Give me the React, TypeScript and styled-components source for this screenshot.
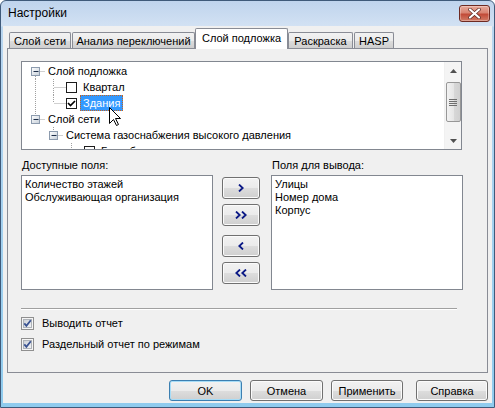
import React from 'react';
import styled, { createGlobalStyle } from 'styled-components';

const GlobalStyle = createGlobalStyle`
  html, body { margin: 0; padding: 0; background: #ffffff; }
  body {
    font-family: "Liberation Sans", Arial, sans-serif;
    font-size: 11px;
    color: #000;
  }
  * { box-sizing: border-box; }
`;

const Window = styled.div`
  width: 495px;
  height: 408px;
  display: flex;
  flex-direction: column;
  border: 1px solid #3f5a7a;
  border-radius: 6px 6px 0 0;
  background: linear-gradient(to bottom, #bfd4ed 0px, #d2e1f3 25px, #b9d6f0 26px, #8fcbee 100%);
  overflow: hidden;
`;

const TitleBar = styled.div`
  height: 25px;
  flex-shrink: 0;
  display: flex;
  align-items: flex-start;
  justify-content: space-between;
  padding: 0 4px 0 7px;
`;

const Title = styled.span`
  font-size: 12px;
  line-height: 25px;
  color: #000;
`;

const CloseButton = styled.div`
  margin-top: 4px;
  width: 31px;
  height: 17px;
  border: 1px solid #6e2a22;
  border-radius: 3px;
  background: linear-gradient(to bottom, #e8a99b 0%, #d98472 45%, #c24b38 55%, #d27c66 100%);
  box-shadow: inset 0 0 0 1px rgba(255, 255, 255, 0.3);
  display: flex;
  align-items: center;
  justify-content: center;
`;

const Client = styled.div`
  flex: 1;
  margin: 0 2px 4px 2px;
  background: #f0f0f0;
  padding: 2px 4px 0 4px;
  display: flex;
  flex-direction: column;
`;

const TabStrip = styled.div`
  height: 20px;
  display: flex;
  align-items: flex-end;
  gap: 1px;
  padding-left: 2px;
  position: relative;
  z-index: 1;
`;

const Tab = styled.div<{ $w: number; $active?: boolean }>`
  width: ${(p) => p.$w}px;
  height: ${(p) => (p.$active ? 21 : 16)}px;
  margin: ${(p) => (p.$active ? '0 -1px -1px -1px' : '0')};
  border: 1px solid #898c95;
  border-bottom: none;
  border-radius: 2px 2px 0 0;
  background: ${(p) =>
    p.$active ? '#ffffff' : 'linear-gradient(to bottom, #f2f2f2 0%, #ebebeb 50%, #dddddd 51%, #cfcfcf 100%)'};
  display: flex;
  align-items: center;
  justify-content: center;
  padding-bottom: ${(p) => (p.$active ? 2 : 0)}px;
  white-space: nowrap;
`;

const Panel = styled.div`
  height: 325px;
  border: 1px solid #898c95;
  background: #f0f0f0;
  padding: 12px 0 0 13px;
  display: flex;
  flex-direction: column;
`;

const Tree = styled.div`
  position: relative;
  width: 441px;
  height: 89px;
  border: 1px solid #828790;
  background: #fff;
  display: flex;
`;

const TreeContent = styled.div`
  flex: 1;
  overflow: hidden;
  padding-top: 1px;
  display: flex;
  flex-direction: column;
`;

const TreeRow = styled.div`
  height: 16px;
  flex-shrink: 0;
  display: flex;
  align-items: center;
  white-space: nowrap;
`;

const TreeLabel = styled.span<{ $selected?: boolean }>`
  height: 16px;
  line-height: 14px;
  padding: 0 2px;
  border: 1px ${(p) => (p.$selected ? 'dotted #c8641e' : 'solid transparent')};
  background: ${(p) => (p.$selected ? '#3399ff' : 'transparent')};
  color: ${(p) => (p.$selected ? '#fff' : '#000')};
`;

const TreeCheck = styled.span`
  width: 11px;
  height: 11px;
  margin-right: 3px;
  border: 1px solid #1c1c1c;
  background: #fff;
  display: flex;
  align-items: center;
  justify-content: center;
  flex-shrink: 0;
`;

const Cursor = styled.svg`
  position: absolute;
  left: 87px;
  top: 45px;
`;

const ScrollBar = styled.div`
  width: 17px;
  background: #f4f4f4;
  border-left: 1px solid #f0f0f0;
  display: flex;
  flex-direction: column;
  align-items: center;
`;

const ScrollArrow = styled.div`
  width: 17px;
  height: 17px;
  display: flex;
  align-items: center;
  justify-content: center;
`;

const ScrollThumb = styled.div`
  margin-top: 3px;
  width: 15px;
  height: 40px;
  border: 1px solid #979797;
  border-radius: 2px;
  background: linear-gradient(to right, #f2f2f2 0%, #e6e6e6 50%, #d8d8d8 51%, #d0d0d0 100%);
  display: flex;
  align-items: center;
  justify-content: center;
`;

const ScrollSpacer = styled.div`
  flex: 1;
`;

const FieldsGrid = styled.div`
  margin-top: 9px;
  display: grid;
  grid-template-columns: 192px 9px 38px 11px 192px;
  grid-template-rows: 13px 115px;
  row-gap: 3px;
`;

const FieldLabel = styled.div<{ $col: number }>`
  grid-column: ${(p) => p.$col};
  grid-row: 1;
  line-height: 13px;
  padding-left: 1px;
`;

const ListBox = styled.div<{ $col: number }>`
  grid-column: ${(p) => p.$col};
  grid-row: 2;
  border: 1px solid #828790;
  background: #fff;
  padding: 2px 3px;
`;

const ListItem = styled.div`
  line-height: 13px;
  white-space: nowrap;
`;

const MoveColumn = styled.div`
  grid-column: 3;
  grid-row: 2;
  padding-top: 2px;
  display: flex;
  flex-direction: column;
`;

const Button = styled.div<{ $w: number; $h: number; $default?: boolean; $gap?: number }>`
  width: ${(p) => p.$w}px;
  height: ${(p) => p.$h}px;
  margin-top: ${(p) => p.$gap ?? 0}px;
  border: 1px solid ${(p) => (p.$default ? '#3c7fb1' : '#707070')};
  border-radius: 3px;
  background: linear-gradient(to bottom, #f2f2f2 0%, #ebebeb 50%, #dddddd 51%, #cfcfcf 100%);
  box-shadow: inset 0 0 0 1px ${(p) => (p.$default ? '#a6dcf7' : '#fbfbfb')};
  display: flex;
  align-items: center;
  justify-content: center;
  flex-shrink: 0;
`;

const Separator = styled.div`
  margin-top: 18px;
  width: 436px;
  height: 2px;
  border-top: 1px solid #a0a0a0;
  border-bottom: 1px solid #ffffff;
`;

const CheckRow = styled.div<{ $gap: number }>`
  margin-top: ${(p) => p.$gap}px;
  height: 13px;
  display: flex;
  align-items: center;
  gap: 8px;
  line-height: 13px;
`;

const Footer = styled.div`
  margin-top: 7px;
  display: flex;
  justify-content: flex-end;
  gap: 8px;
`;

const FooterButton = styled(Button)<{ $extra?: number }>`
  margin-left: ${(p) => p.$extra ?? 0}px;
`;

type TreeNode = {
  level: number;
  label: string;
  kind: 'expand' | 'check';
  checked?: boolean;
  pipes: boolean[];
  up: boolean;
  down: boolean;
  selected?: boolean;
};

const treeRows: TreeNode[] = [
  { level: 0, label: 'Слой подложка', kind: 'expand', pipes: [], up: false, down: true },
  { level: 1, label: 'Квартал', kind: 'check', pipes: [true], up: true, down: true },
  { level: 1, label: 'Здания', kind: 'check', checked: true, pipes: [true], up: true, down: false, selected: true },
  { level: 0, label: 'Слой сети', kind: 'expand', pipes: [], up: true, down: false },
  { level: 1, label: 'Система газоснабжения высокого давления', kind: 'expand', pipes: [false], up: true, down: false },
  { level: 2, label: 'Газ. оборудование', kind: 'check', pipes: [false, false], up: true, down: true },
];

const DOT = { stroke: '#a0a0a0', strokeWidth: 1, strokeDasharray: '1 1' };

function Connector({ node }: { node: TreeNode }) {
  const w = 18 * node.level + (node.kind === 'expand' ? 23 : 26);
  const cx = 13.5 + 18 * node.level;
  return (
    <svg width={w} height={16} style={{ flexShrink: 0 }}>
      {node.pipes.map((p, i) =>
        p ? <line key={i} x1={13.5 + 18 * i} y1={0} x2={13.5 + 18 * i} y2={16} {...DOT} /> : null
      )}
      {node.up && <line x1={cx} y1={0} x2={cx} y2={8} {...DOT} />}
      {node.down && <line x1={cx} y1={9} x2={cx} y2={16} {...DOT} />}
      <line x1={cx + 1} y1={8.5} x2={w} y2={8.5} {...DOT} />
      {node.kind === 'expand' && (
        <g>
          <defs>
            <linearGradient id="exg" x1="0" y1="0" x2="1" y2="1">
              <stop offset="0" stopColor="#ffffff" />
              <stop offset="1" stopColor="#c6cfd9" />
            </linearGradient>
          </defs>
          <rect x={cx - 4} y={4.5} width={8} height={8} fill="url(#exg)" stroke="#8c9bae" />
          <line x1={cx - 2} y1={8.5} x2={cx + 3} y2={8.5} stroke="#1e2f4a" />
        </g>
      )}
    </svg>
  );
}

function TickMark() {
  return (
    <svg width={9} height={9} viewBox="0 0 9 9">
      <path d="M1 4 L3.5 6.5 L8 2" fill="none" stroke="#000" strokeWidth={1.7} />
    </svg>
  );
}

function ThemedCheckbox() {
  return (
    <svg width={13} height={13} viewBox="0 0 13 13">
      <defs>
        <linearGradient id="cbg" x1="0" y1="0" x2="1" y2="1">
          <stop offset="0" stopColor="#cbcfd5" />
          <stop offset="1" stopColor="#f4f5f7" />
        </linearGradient>
      </defs>
      <rect x={0.5} y={0.5} width={12} height={12} fill="#f5f5f5" stroke="#8f8f8f" />
      <rect x={2.5} y={2.5} width={8} height={8} fill="url(#cbg)" stroke="#aeb3b9" />
      <path d="M3.3 6.3 L5.4 8.8 L9.8 3.2" fill="none" stroke="#3a5392" strokeWidth={1.8} />
    </svg>
  );
}

function Chevrons({ dir, count }: { dir: 'right' | 'left'; count: number }) {
  const w = count === 1 ? 6 : 12;
  return (
    <svg width={w} height={8} viewBox={`0 0 ${w} 8`}>
      {Array.from({ length: count }).map((_, i) => {
        const x0 = i * 6;
        const pts =
          dir === 'right'
            ? `${x0 + 1},0.5 ${x0 + 4.7},4 ${x0 + 1},7.5`
            : `${x0 + 5},0.5 ${x0 + 1.3},4 ${x0 + 5},7.5`;
        return <polyline key={i} points={pts} fill="none" stroke="#0c1a86" strokeWidth={1.8} />;
      })}
    </svg>
  );
}

function ScrollTriangle({ up }: { up?: boolean }) {
  return (
    <svg width={7} height={4} viewBox="0 0 7 4">
      <path d={up ? 'M0 4 L3.5 0 L7 4 Z' : 'M0 0 L3.5 4 L7 0 Z'} fill="#505050" />
    </svg>
  );
}

const tabs = [
  { label: 'Слой сети', w: 62 },
  { label: 'Анализ переключений', w: 123 },
  { label: 'Слой подложка', w: 93, active: true },
  { label: 'Раскраска', w: 65 },
  { label: 'HASP', w: 40 },
];

export default function App() {
  return (
    <>
      <GlobalStyle />
      <Window>
        <TitleBar>
          <Title>Настройки</Title>
          <CloseButton>
            <svg width={13} height={11} viewBox="0 0 13 11">
              <path d="M2 1.5 L11 9.5 M11 1.5 L2 9.5" stroke="#5a2a24" strokeWidth={3.6} strokeLinecap="round" />
              <path d="M2 1.5 L11 9.5 M11 1.5 L2 9.5" stroke="#ffffff" strokeWidth={2.2} strokeLinecap="round" />
            </svg>
          </CloseButton>
        </TitleBar>
        <Client>
          <TabStrip>
            {tabs.map((t) => (
              <Tab key={t.label} $w={t.w} $active={t.active}>
                {t.label}
              </Tab>
            ))}
          </TabStrip>
          <Panel>
            <Tree>
              <TreeContent>
                {treeRows.map((n) => (
                  <TreeRow key={n.label}>
                    <Connector node={n} />
                    {n.kind === 'check' && <TreeCheck>{n.checked && <TickMark />}</TreeCheck>}
                    <TreeLabel $selected={n.selected}>{n.label}</TreeLabel>
                  </TreeRow>
                ))}
              </TreeContent>
              <ScrollBar>
                <ScrollArrow>
                  <ScrollTriangle up />
                </ScrollArrow>
                <ScrollThumb>
                  <svg width={8} height={7} viewBox="0 0 8 7">
                    {[0.5, 2.5, 4.5, 6.5].map((y) => (
                      <line key={y} x1={0} y1={y} x2={8} y2={y} stroke="#6e6e6e" />
                    ))}
                  </svg>
                </ScrollThumb>
                <ScrollSpacer />
                <ScrollArrow>
                  <ScrollTriangle />
                </ScrollArrow>
              </ScrollBar>
              <Cursor width={13} height={20} viewBox="0 0 13 20">
                <path
                  d="M0.5 0.5 L0.5 16.5 L4.5 12.5 L7.5 18.5 L9.5 17.5 L6.5 11.5 L11.5 11.5 Z"
                  fill="#fff"
                  stroke="#000"
                />
              </Cursor>
            </Tree>

            <FieldsGrid>
              <FieldLabel $col={1}>Доступные поля:</FieldLabel>
              <FieldLabel $col={5}>Поля для вывода:</FieldLabel>
              <ListBox $col={1}>
                <ListItem>Количество этажей</ListItem>
                <ListItem>Обслуживающая организация</ListItem>
              </ListBox>
              <MoveColumn>
                <Button $w={38} $h={22}>
                  <Chevrons dir="right" count={1} />
                </Button>
                <Button $w={38} $h={22} $gap={5}>
                  <Chevrons dir="right" count={2} />
                </Button>
                <Button $w={38} $h={22} $gap={9}>
                  <Chevrons dir="left" count={1} />
                </Button>
                <Button $w={38} $h={22} $gap={5}>
                  <Chevrons dir="left" count={2} />
                </Button>
              </MoveColumn>
              <ListBox $col={5}>
                <ListItem>Улицы</ListItem>
                <ListItem>Номер дома</ListItem>
                <ListItem>Корпус</ListItem>
              </ListBox>
            </FieldsGrid>

            <Separator />
            <CheckRow $gap={7}>
              <ThemedCheckbox />
              Выводить отчет
            </CheckRow>
            <CheckRow $gap={8}>
              <ThemedCheckbox />
              Раздельный отчет по режимам
            </CheckRow>
          </Panel>
          <Footer>
            <FooterButton $w={73} $h={21} $default>
              OK
            </FooterButton>
            <FooterButton $w={73} $h={21}>
              Отмена
            </FooterButton>
            <FooterButton $w={72} $h={21}>
              Применить
            </FooterButton>
            <FooterButton $w={72} $h={21} $extra={5}>
              Справка
            </FooterButton>
          </Footer>
        </Client>
      </Window>
    </>
  );
}
